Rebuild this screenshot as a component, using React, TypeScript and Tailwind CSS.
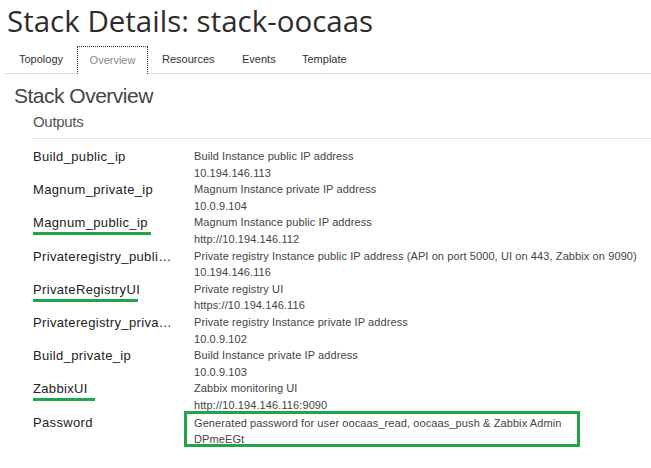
import React from "react";

const rows: { label: string; desc: string; value: string; underline?: number; boxed?: boolean }[] = [
  { label: "Build_public_ip", desc: "Build Instance public IP address", value: "10.194.146.113" },
  { label: "Magnum_private_ip", desc: "Magnum Instance private IP address", value: "10.0.9.104" },
  { label: "Magnum_public_ip", desc: "Magnum Instance public IP address", value: "http://10.194.146.112", underline: 118 },
  { label: "Privateregistry_public_ip", desc: "Private registry Instance public IP address (API on port 5000, UI on 443, Zabbix on 9090)", value: "10.194.146.116" },
  { label: "PrivateRegistryUI", desc: "Private registry UI", value: "https://10.194.146.116", underline: 105 },
  { label: "Privateregistry_private_ip", desc: "Private registry Instance private IP address", value: "10.0.9.102" },
  { label: "Build_private_ip", desc: "Build Instance private IP address", value: "10.0.9.103" },
  { label: "ZabbixUI", desc: "Zabbix monitoring UI", value: "http://10.194.146.116:9090", underline: 62 },
  { label: "Password", desc: "Generated password for user oocaas_read, oocaas_push & Zabbix Admin", value: "DPmeEGt", boxed: true },
];

export default function App() {
  return (
    <div className="w-[651px] h-[468px] bg-white overflow-hidden text-[#333]" style={{ fontFamily: '"Liberation Sans", Arial, sans-serif' }}>
      <h1 className="pl-[7px] pt-[1px] text-[29.5px] leading-[40px] text-[#2d2d2d] whitespace-nowrap" style={{ fontFamily: '"Open Sans", sans-serif' }}>
        Stack Details: stack-oocaas
      </h1>
      <div className="mt-[5px] ml-[5px] flex border-b border-[#ddd] h-[28px] items-stretch text-[11px]">
        <div className="w-[72px] flex items-center pl-[14px] text-[#333]">Topology</div>
        <div className="w-[71px] flex items-center justify-center border border-dotted border-[#333] border-b-0 text-[#888] mb-[-1px] bg-white">Overview</div>
        <div className="w-[80px] flex items-center pl-[14px] text-[#333]">Resources</div>
        <div className="w-[60px] flex items-center pl-[14px] text-[#333]">Events</div>
        <div className="flex items-center pl-[14px] text-[#333]">Template</div>
      </div>
      <h2 className="pl-[14px] mt-[9px] text-[21px] leading-[26px] font-light text-[#444] tracking-[-0.5px]">Stack Overview</h2>
      <h3 className="pl-[33px] mt-[3px] text-[15px] leading-[20px] text-[#555] tracking-[-0.3px]">Outputs</h3>
      <div className="ml-[33px] mt-[6px] border-t border-[#e5e5e5]" />
      <div className="ml-[33px] mt-[9px]">
        {rows.map((r) => (
          <div key={r.label} className="flex">
            <div className="w-[161px] shrink-0 pr-[18px] pt-[1px] flex flex-col items-start">
              <div className="max-w-[140px] text-[13px] leading-[15px] tracking-[0.35px] text-[#222] truncate">{r.label}</div>
              {r.underline ? <div className="h-[3px] bg-[#1fa64a] mt-[2px]" style={{ width: r.underline }} /> : null}
            </div>
            {r.boxed ? (
              <div className="ml-[-10px] mt-[-3px] border-[3px] border-[#1fa64a] w-[396px] h-[36px] pl-[7px] pt-[1px] text-[11px] leading-[16.6px] text-[#444] tracking-[0.1px]">
                <div>{r.desc}</div>
                <div>{r.value}</div>
              </div>
            ) : (
              <div className="text-[11px] leading-[16.6px] text-[#444] tracking-[0.1px]">
                <div className="whitespace-nowrap">{r.desc}</div>
                <div>{r.value}</div>
              </div>
            )}
          </div>
        ))}
      </div>
    </div>
  );
}
